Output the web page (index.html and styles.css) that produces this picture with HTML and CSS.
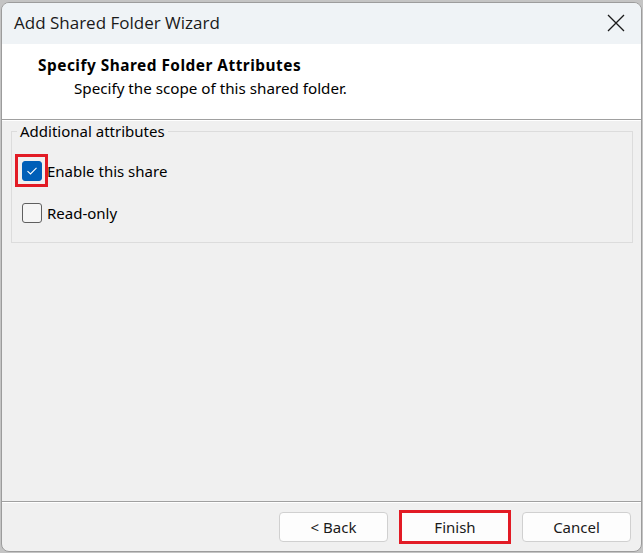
FILE: index.html
```html
<!DOCTYPE html>
<html>
<head>
<meta charset="utf-8">
<link rel="stylesheet" href="styles.css">
</head>
<body>
<div class="window">
  <div class="titlebar">
    <span class="title">Add Shared Folder Wizard</span>
    <svg class="close" width="18" height="18" viewBox="0 0 18 18"><path d="M1 1L17 17M17 1L1 17" stroke="#1a1a1a" stroke-width="1.3" fill="none"/></svg>
  </div>
  <div class="header">
    <div class="h-title">Specify Shared Folder Attributes</div>
    <div class="h-sub">Specify the scope of this shared folder.</div>
  </div>
  <div class="content">
    <fieldset class="group">
      <legend>Additional attributes</legend>
      <label class="check">
        <span class="cell highlight"><span class="box checked"><svg width="12" height="10" viewBox="0 0 12 10"><path d="M1.5 5.2L4.5 8L10.5 1.8" stroke="#fff" stroke-width="1.1" fill="none"/></svg></span></span>
        <span class="lbl">Enable this share</span>
      </label>
      <label class="check">
        <span class="cell"><span class="box"></span></span>
        <span class="lbl">Read-only</span>
      </label>
    </fieldset>
  </div>
  <div class="footer">
    <button class="btn">&lt; Back</button>
    <button class="btn finish">Finish</button>
    <button class="btn">Cancel</button>
  </div>
</div>
</body>
</html>
```
FILE: styles.css
```css
html, body { margin: 0; padding: 0; }
body {
  background: #c4c4c4;
  width: 643px;
  height: 553px;
  overflow: hidden;
  font-family: "Noto Sans", "Open Sans", sans-serif;
  color: #000;
}
.window {
  margin: 2px 0 0 1px;
  width: 639px;
  height: 548px;
  border: 1px solid #9c9c9c;
  border-radius: 8px;
  overflow: hidden;
  background: #f0f0f0;
  display: flex;
  flex-direction: column;
}
.titlebar {
  height: 41px;
  background: #eff3f6;
  display: flex;
  align-items: center;
  justify-content: space-between;
  padding: 0 16px 0 12px;
  flex: none;
}
.title {
  font-family: "Open Sans", "Noto Sans", sans-serif;
  font-size: 17px;
  color: #1a1a1a;
  margin-top: -2px;
}
.close { display: block; margin-top: -1px; }
.header {
  background: #fff;
  height: 76px;
  border-bottom: 1px solid #a0a0a0;
  box-shadow: 0 1px 0 #fff;
  flex: none;
  box-sizing: border-box;
  padding: 12px 0 0 36px;
}
.h-title {
  font-weight: bold;
  font-size: 15.4px;
  letter-spacing: 0.5px;
  line-height: 20px;
}
.h-sub {
  margin: 2px 0 0 36px;
  font-size: 15.2px;
  line-height: 20px;
}
.content {
  flex: 1;
  padding: 2px 8px 0 9px;
  border-bottom: 1px solid #a0a0a0;
}
.group {
  margin: 0;
  border: 1px solid #dcdcdc;
  padding: 14px 0 13px 3px;
  display: flex;
  flex-direction: column;
  gap: 9px;
}
legend {
  font-size: 15px;
  padding: 0 3px;
  margin-left: 2px;
  line-height: 18px;
  margin-top: 1px;
}
.check {
  display: flex;
  align-items: center;
  font-size: 15px;
  height: 33px;
}
.cell {
  width: 33px;
  height: 33px;
  box-sizing: border-box;
  display: flex;
  align-items: center;
  justify-content: center;
  flex: none;
}
.cell.highlight { border: 3px solid #e21b25; }
.lbl { white-space: nowrap; margin-left: -1px; }
.box {
  width: 20px;
  height: 20px;
  border: 1px solid #5f5f5f;
  border-radius: 3px;
  background: #f5f5f5;
  box-sizing: border-box;
  display: flex;
  align-items: center;
  justify-content: center;
  flex: none;
}
.box.checked {
  background: #005fb8;
  border-color: #005fb8;
}
.footer {
  height: 48px;
  flex: none;
  display: flex;
  justify-content: flex-end;
  align-items: center;
  gap: 11px;
  padding-right: 10px;
  border-top: 1px solid #fff;
}
.btn {
  width: 109px;
  height: 30px;
  background: #fdfdfd;
  border: 1px solid #d0d0d0;
  border-radius: 4px;
  font-family: "Noto Sans", "Open Sans", sans-serif;
  font-size: 15px;
  color: #1a1a1a;
  padding: 0;
}
.btn.finish {
  border: 3px solid #e21b25;
  border-radius: 0;
  width: 112px;
  height: 34px;
  background: #fdfdfd;
}
```
